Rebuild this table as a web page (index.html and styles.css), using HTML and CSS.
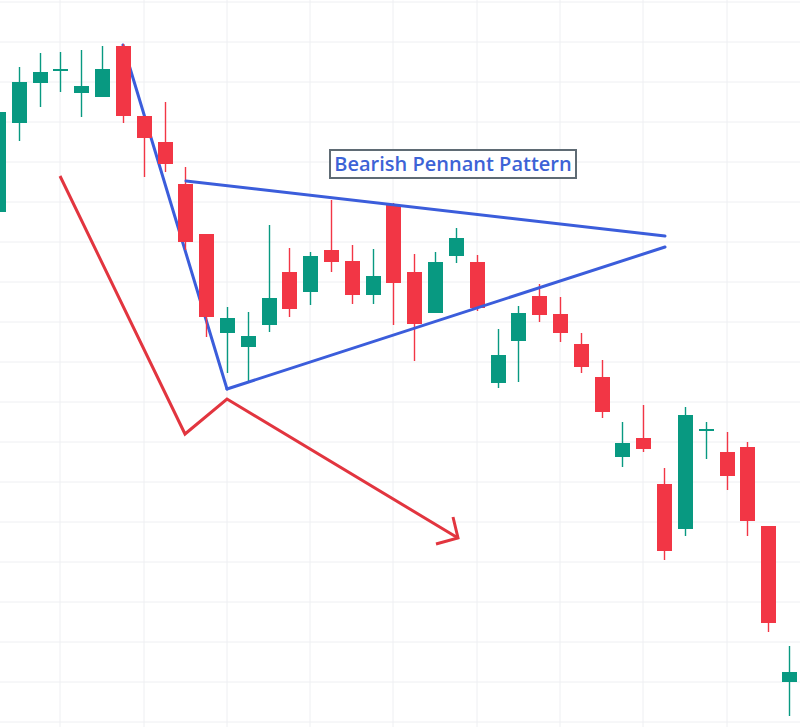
FILE: index.html
```html
<!DOCTYPE html>
<html>
<head>
<meta charset="utf-8">
<link rel="stylesheet" href="styles.css">
</head>
<body>
<div class="chart">
  <svg class="plot" width="800" height="727" viewBox="0 0 800 727">
    <g class="grid">
      <line x1="60" y1="0" x2="60" y2="727"/>
      <line x1="144" y1="0" x2="144" y2="727"/>
      <line x1="227" y1="0" x2="227" y2="727"/>
      <line x1="310" y1="0" x2="310" y2="727"/>
      <line x1="393" y1="0" x2="393" y2="727"/>
      <line x1="477" y1="0" x2="477" y2="727"/>
      <line x1="560" y1="0" x2="560" y2="727"/>
      <line x1="643" y1="0" x2="643" y2="727"/>
      <line x1="727" y1="0" x2="727" y2="727"/>
      <line x1="0" y1="2" x2="800" y2="2"/>
      <line x1="0" y1="42" x2="800" y2="42"/>
      <line x1="0" y1="82" x2="800" y2="82"/>
      <line x1="0" y1="122" x2="800" y2="122"/>
      <line x1="0" y1="162" x2="800" y2="162"/>
      <line x1="0" y1="202" x2="800" y2="202"/>
      <line x1="0" y1="242" x2="800" y2="242"/>
      <line x1="0" y1="282" x2="800" y2="282"/>
      <line x1="0" y1="322" x2="800" y2="322"/>
      <line x1="0" y1="362" x2="800" y2="362"/>
      <line x1="0" y1="402" x2="800" y2="402"/>
      <line x1="0" y1="442" x2="800" y2="442"/>
      <line x1="0" y1="482" x2="800" y2="482"/>
      <line x1="0" y1="522" x2="800" y2="522"/>
      <line x1="0" y1="562" x2="800" y2="562"/>
      <line x1="0" y1="602" x2="800" y2="602"/>
      <line x1="0" y1="642" x2="800" y2="642"/>
      <line x1="0" y1="682" x2="800" y2="682"/>
      <line x1="0" y1="722" x2="800" y2="722"/>
    </g>
    <polyline class="arrow" points="60,176 185,434 227,399 458,538"/>
    <polyline class="arrow" points="453,517 458,538 436,544"/>
    <line class="pennant" x1="123" y1="45" x2="227" y2="389"/>
    <g id="candles"></g>
    <polyline class="pennant" points="186,181 665,236"/>
    <polyline class="pennant" points="227,389 665,247"/>
  </svg>
  <div class="label">Bearish Pennant Pattern</div>
</div>
<script src="app.js"></script>
</body>
</html>
```
FILE: styles.css
```css
html, body {
  margin: 0;
  padding: 0;
  background: #ffffff;
}
.chart {
  position: relative;
  width: 800px;
  height: 727px;
  overflow: hidden;
}
.plot {
  display: block;
}
.grid line {
  stroke: #eeeff2;
  stroke-width: 1;
}
.arrow {
  fill: none;
  stroke: #e2353f;
  stroke-width: 3;
  stroke-linejoin: miter;
}
.pennant {
  fill: none;
  stroke: #3b5ddb;
  stroke-width: 3;
  stroke-linecap: round;
}
.wick {
  stroke-width: 1.4;
}
.up { fill: #089981; stroke: #089981; }
.down { fill: #f23645; stroke: #f23645; }
.body { stroke: none; }
.label {
  position: absolute;
  left: 329px;
  top: 149px;
  width: 244px;
  height: 26px;
  border: 2px solid #5f6b74;
  background: #ffffff;
  color: #3d63d6;
  font-family: "Open Sans", "Noto Sans", sans-serif;
  font-weight: 600;
  font-size: 20px;
  line-height: 26px;
  text-align: center;
  white-space: nowrap;
}
```
FILE: app.js
```js
var data = [
  [-9,'u',112,212,100,220],
  [12,'u',82,123,67,141],
  [33,'u',72,83,53,107],
  [53,'u',69,71,52,92],
  [74,'u',86,93,50,117],
  [95,'u',69,97,46,97],
  [116,'d',46,116,44,123],
  [137,'d',116,138,116,177],
  [158,'d',142,164,102,172],
  [178,'d',184,242,167,250],
  [199,'d',234,317,234,337],
  [220,'u',318,333,307,373],
  [241,'u',336,347,312,382],
  [262,'u',298,325,225,332],
  [282,'d',272,309,248,317],
  [303,'u',256,292,252,305],
  [324,'d',250,262,200,272],
  [345,'d',261,295,245,304],
  [366,'u',276,295,249,304],
  [386,'d',205,283,203,325],
  [407,'d',272,324,254,361],
  [428,'u',262,313,252,313],
  [449,'u',238,256,228,263],
  [470,'d',262,308,255,311],
  [491,'u',355,383,329,388],
  [511,'u',313,341,306,382],
  [532,'d',296,315,284,322],
  [553,'d',314,333,297,342],
  [574,'d',344,367,333,373],
  [595,'d',377,412,360,418],
  [615,'u',443,457,422,467],
  [636,'d',438,449,405,452],
  [657,'d',484,551,468,560],
  [678,'u',415,529,407,536],
  [699,'u',429,431,422,459],
  [720,'d',452,476,432,490],
  [740,'d',447,521,442,536],
  [761,'d',526,623,526,632],
  [782,'u',672,682,646,716]
];
var ns = 'http://www.w3.org/2000/svg';
var g = document.getElementById('candles');
data.forEach(function (c) {
  var cls = c[1] === 'u' ? 'up' : 'down';
  var cx = c[0] + 7.5;
  var w = document.createElementNS(ns, 'line');
  w.setAttribute('x1', cx); w.setAttribute('x2', cx);
  w.setAttribute('y1', c[4]); w.setAttribute('y2', c[5]);
  w.setAttribute('class', 'wick ' + cls);
  g.appendChild(w);
  var r = document.createElementNS(ns, 'rect');
  r.setAttribute('x', c[0]); r.setAttribute('width', 15);
  r.setAttribute('y', c[2]); r.setAttribute('height', Math.max(2, c[3] - c[2]));
  r.setAttribute('class', 'body ' + cls);
  g.appendChild(r);
});
```
